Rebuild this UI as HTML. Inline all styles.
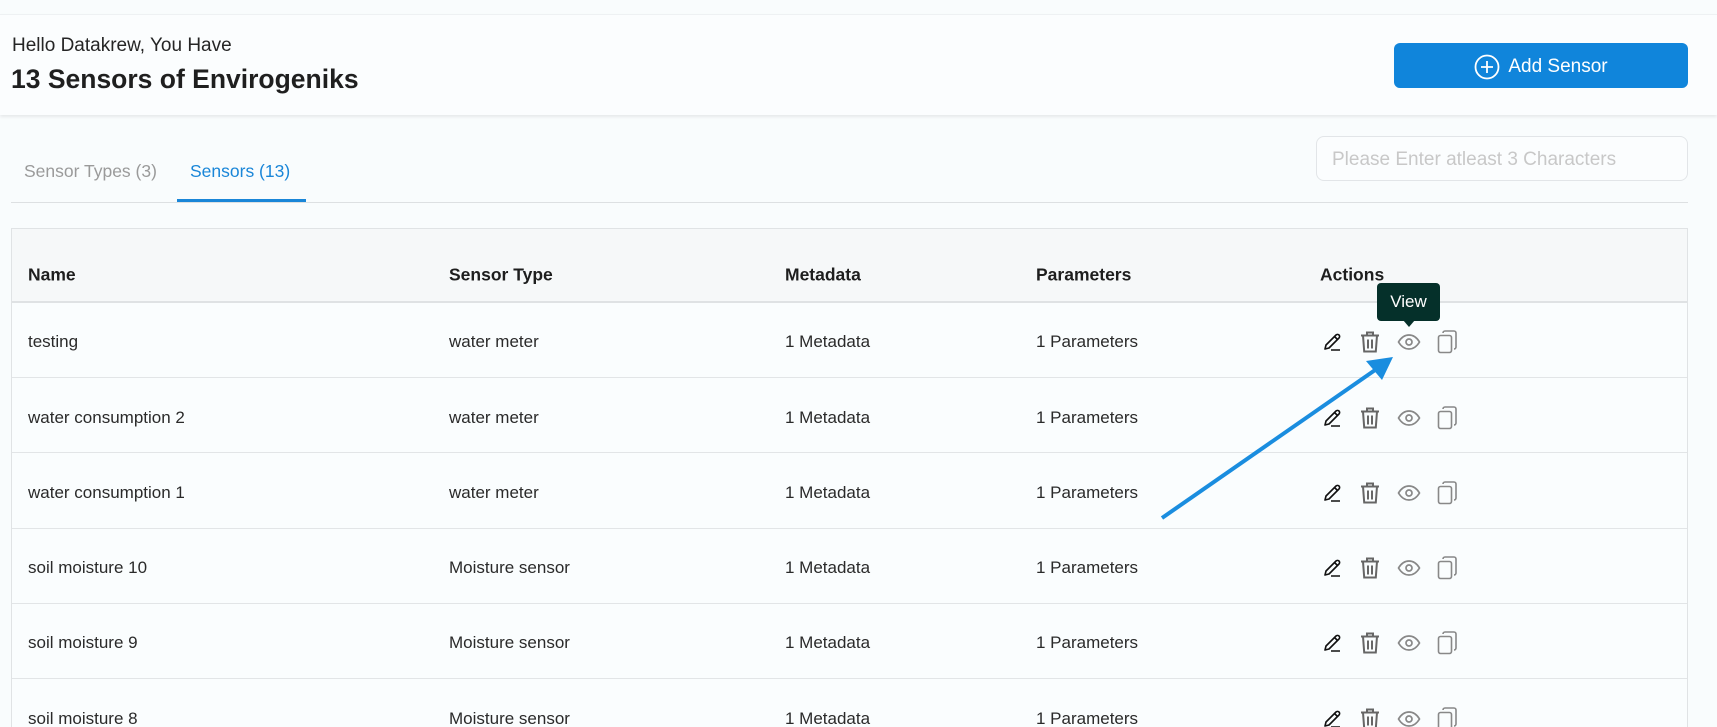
<!DOCTYPE html>
<html><head><meta charset="utf-8"><style>
*{margin:0;padding:0;box-sizing:border-box}
html,body{width:1717px;height:727px;overflow:hidden}
body{background:#f9fcfd;font-family:"Liberation Sans",sans-serif;color:#222;position:relative}
.a{position:absolute;white-space:nowrap}
.hdr{position:absolute;left:0;top:14px;width:1717px;height:101px;background:#fbfdfe;box-shadow:0 2px 3px rgba(0,0,0,.08);border-top:1px solid #eef1f3}
.btn{position:absolute;left:1394px;top:43px;width:294px;height:45px;background:#1085db;border-radius:6px;color:#fff;font-size:19px;display:flex;align-items:center;justify-content:center;gap:8px;padding-top:2px}
.search{position:absolute;left:1316px;top:136px;width:372px;height:45px;border:1px solid #e2e5e8;border-radius:8px;background:#fbfdfe;color:#c8c8c8;font-size:19px;padding:12px 15px 0}
.tbl{position:absolute;left:11px;top:228px;width:1677px;height:499px;border:1px solid #e0e3e5;border-bottom:none;background:#fafdfe;overflow:hidden}
.th{position:absolute;left:0;top:0;width:100%;height:74px;background:#f6f8f9;border-bottom:2px solid #dfe2e4}
.row{position:absolute;left:0;width:100%;height:75px;border-bottom:1px solid #e2e5e7}
.c{position:absolute;font-size:17px;top:53%;transform:translateY(-50%);color:#2a2a2a}
.th .c{font-weight:bold;font-size:17.5px;color:#1e1e1e;top:46px}
.ic{position:absolute;top:53%;transform:translateY(-50%)}
</style></head><body>
<div class="hdr"></div>
<div class="a" style="left:12px;top:35px;font-size:19px;color:#252525">Hello Datakrew, You Have</div>
<div class="a" style="left:11px;top:64px;font-size:26.5px;font-weight:bold;color:#1f1f1f">13 Sensors of Envirogeniks</div>
<div class="btn"><svg width="26" height="26" viewBox="0 0 26 26"><circle cx="13" cy="13" r="11.5" fill="none" stroke="#fff" stroke-width="1.8"/><path d="M13 7v12M7 13h12" stroke="#fff" stroke-width="1.8"/></svg><span>Add Sensor</span></div>
<div class="search">Please Enter atleast 3 Characters</div>
<div class="a" style="left:24px;top:161px;font-size:17.5px;color:#9a9a9a">Sensor Types (3)</div>
<div class="a" style="left:190px;top:161px;font-size:17.5px;color:#1a86d8">Sensors (13)</div>
<div class="a" style="left:11px;top:202px;width:1677px;height:1px;background:#dde0e2"></div>
<div class="a" style="left:177px;top:199px;width:129px;height:3px;background:#1a86d8"></div>
<div class="tbl">
<div class="th"><div class="c" style="left:16px">Name</div><div class="c" style="left:437px">Sensor Type</div><div class="c" style="left:773px">Metadata</div><div class="c" style="left:1024px">Parameters</div><div class="c" style="left:1308px">Actions</div></div>
<div id="rows"></div>
</div>
<script>
var d=[["testing","water meter"],["water consumption 2","water meter"],["water consumption 1","water meter"],["soil moisture 10","Moisture sensor"],["soil moisture 9","Moisture sensor"],["soil moisture 8","Moisture sensor"]];
var icons='<svg class="ic" style="left:1310px" width="20" height="20" viewBox="0 0 20 20"><path d="M3 17l1-4L14 3a2 2 0 0 1 3 3L7 16z M12.5 4.5l3 3 M9 18h9" fill="none" stroke="#111" stroke-width="1.6" stroke-linejoin="round"/></svg>'+
'<svg class="ic" style="left:1347px" width="22" height="23" viewBox="0 0 22 23"><path d="M2 5h18M8 5V2h6v3M4 5l1.2 16h11.6L18 5M9 9v9M13 9v9" fill="none" stroke="#666" stroke-width="2"/></svg>'+
'<svg class="ic" style="left:1385px" width="24" height="18" viewBox="0 0 24 18"><path d="M1.5 9C4.5 4 8 2 12 2s7.5 2 10.5 7c-3 5-6.5 7-10.5 7S4.5 14 1.5 9z" fill="none" stroke="#888" stroke-width="1.7"/><circle cx="12" cy="9" r="3" fill="none" stroke="#888" stroke-width="1.7"/></svg>'+
'<svg class="ic" style="left:1425px" width="22" height="24" viewBox="0 0 22 24"><rect x="1.5" y="5.5" width="13" height="17" rx="2" fill="none" stroke="#888" stroke-width="1.6"/><path d="M6 3a2 2 0 0 1 2-2h9a2 2 0 0 1 2 2v14a2 2 0 0 1-2 2" fill="none" stroke="#888" stroke-width="1.6"/></svg>';
var h='';d.forEach(function(r,i){h+='<div class="row" style="top:'+(74+i*75.3)+'px"><div class="c" style="left:16px">'+r[0]+'</div><div class="c" style="left:437px">'+r[1]+'</div><div class="c" style="left:773px">1 Metadata</div><div class="c" style="left:1024px">1 Parameters</div>'+icons+'</div>';});
document.getElementById('rows').innerHTML=h;
</script>
<div class="a" style="left:1377px;top:283px;width:63px;height:38px;background:#05302a;border-radius:4px;color:#fff;font-size:17px;text-align:center;line-height:38px">View</div>
<div class="a" style="left:1403px;top:320px;width:0;height:0;border-left:6px solid transparent;border-right:6px solid transparent;border-top:7px solid #05302a"></div>
<svg class="a" style="left:0;top:0" width="1717" height="727"><line x1="1162" y1="518" x2="1378" y2="368" stroke="#1a8ddf" stroke-width="4"/><polygon points="1393,357 1366,361 1382,380" fill="#1a8ddf"/></svg>
</body></html>
